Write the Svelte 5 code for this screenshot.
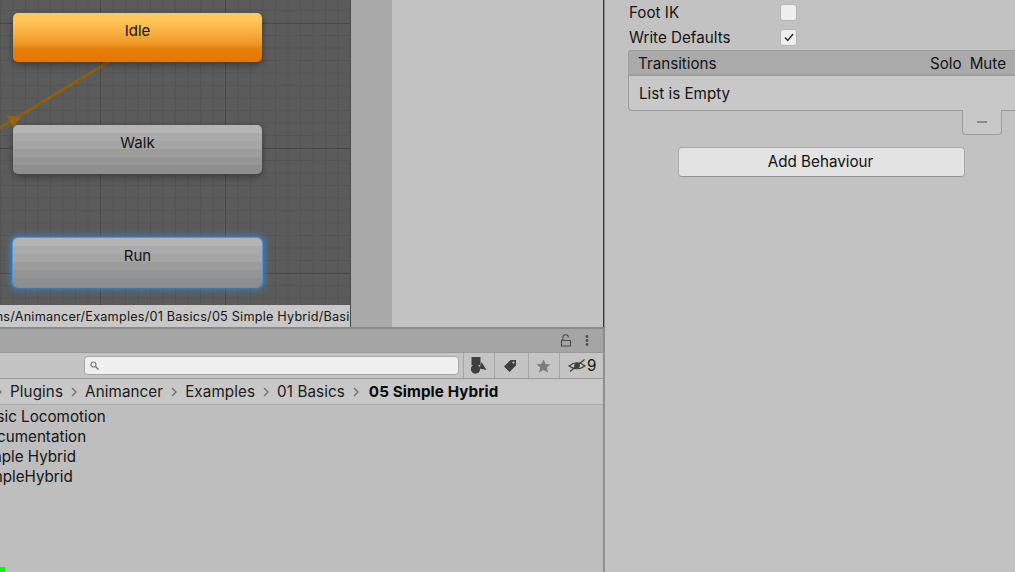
<script>
  const crumbs = ['Plugins', 'Animancer', 'Examples', '01 Basics'];
  const nodes = [
    { name: 'Idle', kind: 'default' },
    { name: 'Walk', kind: 'plain' },
    { name: 'Run', kind: 'selected' }
  ];
</script>

<div class="window">
  <div class="left">
    <div class="animator">
      <div class="graph-col">
        <div class="graph">
          <svg class="link" width="350" height="140" viewBox="0 0 350 140">
            <path d="M-2 129 L110 61" stroke="#8d5f0c" stroke-width="3" fill="none" />
            <path d="M6.500 115.500 L21 117 L13 127 Z" fill="#96650a" />
          </svg>
          {#each nodes as node}
            <div class="node {node.kind}"><span>{node.name}</span></div>
          {/each}
        </div>
        <div class="pathbar"><span>Assets/Plugins/Animancer/Examples/01 Basics/05 Simple Hybrid/Basic</span></div>
      </div>
      <div class="gutter"></div>
      <div class="blank"></div>
    </div>

    <div class="project">
      <div class="tabbar">
        <svg width="12" height="13" viewBox="0 0 12 13" class="lock">
          <path d="M1.500 6.500h9v5.500h-9z M2.800 6.500V3.500a2.800 2.800 0 0 1 5.600 0" fill="none" stroke="#4c4c4c" stroke-width="1.100" />
        </svg>
        <svg width="4" height="13" viewBox="0 0 4 13" class="dots">
          <circle cx="2" cy="2.500" r="1.400" fill="#4f4f4f" />
          <circle cx="2" cy="6.500" r="1.400" fill="#4f4f4f" />
          <circle cx="2" cy="10.500" r="1.400" fill="#4f4f4f" />
        </svg>
      </div>
      <div class="toolbar">
        <div class="search">
          <svg width="9" height="9" viewBox="0 0 9 9">
            <circle cx="3.500" cy="3.500" r="2.500" fill="none" stroke="#777" stroke-width="1.200" />
            <path d="M5.500 5.500L8.500 8.500" stroke="#777" stroke-width="1.500" />
          </svg>
        </div>
        <div class="tool first">
          <svg width="17" height="17" viewBox="0 0 17 17">
            <rect x="1.500" y="0" width="9" height="8" fill="#3f3f3f" />
            <circle cx="5.500" cy="12" r="4.700" fill="#3f3f3f" />
            <path d="M11.500 5 L16.500 13 L9.500 11.500 Z" fill="#3f3f3f" />
          </svg>
        </div>
        <div class="tool tag">
          <svg width="14" height="14" viewBox="0 0 14 14">
            <path d="M7.500 1 L13 1 L13 6.500 L6.500 13 L1 7.500 Z M10.500 2.500a1 1 0 1 0 .01 0z" fill="#3f3f3f" fill-rule="evenodd" />
          </svg>
        </div>
        <div class="tool star">
          <svg width="15" height="14" viewBox="0 0 15 14">
            <path d="M7.500 .5 L9.600 5 L14.500 5.400 L10.800 8.600 L12 13.500 L7.500 10.900 L3 13.500 L4.200 8.600 L.5 5.400 L5.400 5 Z" fill="#7c7c7c" />
          </svg>
        </div>
        <div class="tool eye">
          <svg width="18" height="15" viewBox="0 0 18 15">
            <path d="M1 8 Q9 1.500 17 8 Q9 13.500 1 8 Z" fill="none" stroke="#3f3f3f" stroke-width="1.200" />
            <circle cx="9" cy="7.500" r="2.800" fill="#3f3f3f" />
            <path d="M2 13.500 L16.500 1.500" stroke="#3f3f3f" stroke-width="1.200" />
          </svg>
          <span>9</span>
        </div>
      </div>
      <div class="crumbs">
        <svg class="chev lead" width="6" height="10" viewBox="0 0 6 10"><path d="M1 1l4 4-4 4" /></svg>
        {#each crumbs as crumb}
          <span>{crumb}</span>
          <svg class="chev" width="6" height="10" viewBox="0 0 6 10"><path d="M1 1l4 4-4 4" /></svg>
        {/each}
        <b>05 Simple Hybrid</b>
      </div>
      <div class="list">
        <div class="row r0">Basic Locomotion</div>
        <div class="row r1">Documentation</div>
        <div class="row r2">Simple Hybrid</div>
        <div class="row r3">SimpleHybrid</div>
        <div class="green"></div>
      </div>
    </div>
  </div>

  <div class="inspector">
    <div class="field">
      <label>Foot IK</label>
      <div class="check"></div>
    </div>
    <div class="field">
      <label>Write Defaults</label>
      <div class="check">
        <svg width="10" height="9" viewBox="0 0 10 9"><path d="M1 4.500L3.800 7.500L9 1" fill="none" stroke="#2a2a2a" stroke-width="1.400" /></svg>
      </div>
    </div>
    <div class="transitions">
      <div class="thead">
        <span class="grow">Transitions</span>
        <span>Solo</span>
        <span>Mute</span>
      </div>
      <div class="tbody">List is Empty</div>
      <div class="footer"><div class="minus"><i></i></div></div>
    </div>
    <button class="add">Add Behaviour</button>
  </div>
</div>

<style>
  :global(body) {
    margin: 0;
    overflow: hidden;
  }

  .window {
    width: 1015px;
    height: 572px;
    display: flex;
    overflow: hidden;
    background: #c2c2c2;
    color: #141414;
    font-family: Inter, "Noto Sans", sans-serif;
    font-size: 15.200px;
  }

  .left {
    width: 604px;
    display: flex;
    flex-direction: column;
    flex: none;
  }

  .animator {
    height: 327px;
    display: flex;
    flex: none;
  }

  .graph-col {
    width: 350px;
    display: flex;
    flex-direction: column;
    flex: none;
  }

  .graph {
    position: relative;
    height: 305px;
    flex: none;
    background-color: #5b5b5b;
    background-image:
      linear-gradient(to right, #545454 1px, transparent 1px),
      linear-gradient(to bottom, #545454 1px, transparent 1px);
    background-size: 12.500px 100%, 100% 12.500px;
    background-position: 0 0, 0 10px;
    overflow: hidden;
  }

  .graph::before {
    content: "";
    position: absolute;
    inset: 0;
    background-image:
      linear-gradient(to right, #484848 1px, transparent 1px),
      linear-gradient(to bottom, #484848 1px, transparent 1px);
    background-size: 125px 100%, 100% 125px;
    background-position: 100px 0, 0 23px;
  }

  .link {
    position: absolute;
    left: 0;
    top: 0;
  }

  .node {
    position: absolute;
    left: 13px;
    width: 249px;
    height: 49px;
    border-radius: 5px;
    text-align: center;
    font-size: 15px;
    box-shadow: 0 3px 7px rgba(0, 0, 0, 0.33);
  }

  .node span {
    display: block;
    padding-top: 9px;
    line-height: 18px;
  }

  .node:nth-of-type(1) {
    top: 13px;
  }

  .node:nth-of-type(2) {
    top: 125px;
  }

  .node:nth-of-type(3) {
    top: 238px;
  }

  .default {
    background: linear-gradient(to bottom,
      #ffc95c 0, #ffc558 8px, #f8ae3f 20px, #ef9a28 30px, #e87f08 36px, #e57500 49px);
  }

  .plain,
  .selected {
    background: linear-gradient(to bottom,
      #b4b4b4 0 8px, #aaaaaa 8px 16px, #a5a5a5 16px 24px, #9c9c9c 24px 32px, #959595 32px 40px, #8e8e8e 40px 49px);
  }

  .selected {
    box-shadow: 0 0 1px 1px #4a9de6, 0 0 6px 3px rgba(55, 140, 225, 0.65);
  }

  .pathbar {
    height: 22px;
    flex: none;
    background: #c8c8c8;
    overflow: hidden;
    white-space: nowrap;
    font-size: 12.700px;
    line-height: 24px;
    letter-spacing: 0.2px;
    color: #161616;
    display: flex;
    justify-content: flex-end;
  }

  .pathbar span {
    margin-right: -7px;
  }

  .gutter {
    width: 42px;
    flex: none;
    background: #a9a9a9;
    border-left: 1px solid #4b4b4b;
    box-sizing: border-box;
  }

  .blank {
    flex: 1;
    background: #c2c2c2;
    border-right: 1px solid #333333;
  }

  .project {
    flex: 1;
    display: flex;
    flex-direction: column;
    border-top: 2px solid #8b8b8b;
    border-right: 1px solid #8b8b8b;
  }

  .tabbar {
    height: 23px;
    flex: none;
    background: #a5a5a5;
    display: flex;
    align-items: center;
    justify-content: flex-end;
    gap: 13px;
    padding-right: 14px;
  }

  .toolbar {
    height: 27px;
    flex: none;
    box-sizing: border-box;
    display: flex;
    align-items: stretch;
    background: #c4c4c4;
    border-top: 1px solid #9a9a9a;
    border-bottom: 1px solid #9a9a9a;
  }

  .search {
    margin: 3px 4px 0 84px;
    width: 375px;
    height: 19px;
    box-sizing: border-box;
    background: #f0f0f0;
    border: 1px solid #a8a8a8;
    border-radius: 4px;
    display: flex;
    align-items: center;
    padding-left: 5px;
  }

  .tool {
    border-left: 1px solid #a6a6a6;
    display: flex;
    align-items: center;
    justify-content: center;
    box-sizing: border-box;
  }

  .first {
    width: 31px;
    padding-right: 2px;
  }

  .tag {
    width: 34px;
    padding-right: 4px;
  }

  .star {
    width: 31px;
    padding-right: 1px;
  }

  .eye {
    flex: 1;
    justify-content: flex-start;
    padding-left: 8px;
    gap: 1px;
  }

  .crumbs {
    height: 26px;
    flex: none;
    box-sizing: border-box;
    display: flex;
    align-items: center;
    gap: 8px;
    background: #c8c8c8;
    border-bottom: 1px solid #acacac;
    color: #1a1a1a;
    letter-spacing: 0.1px;
  }

  .crumbs b {
    font-weight: 700;
    color: #0a0a0a;
    margin-left: 2px;
  }

  .chev {
    flex: none;
    fill: none;
    stroke: #6e6e6e;
    stroke-width: 1.300;
  }

  .lead {
    margin-left: -4px;
  }

  .list {
    flex: 1;
    position: relative;
    background: #bebebe;
    padding-top: 2px;
    overflow: hidden;
  }

  .row {
    height: 20px;
    line-height: 20px;
    white-space: nowrap;
    color: #151515;
  }

  .r0 { margin-left: -22px; }
  .r1 { margin-left: -23px; }
  .r2 { margin-left: -25px; }
  .r3 { margin-left: -24px; }

  .green {
    position: absolute;
    left: 0;
    bottom: 0;
    width: 5px;
    height: 5px;
    background: #00ff00;
  }

  .inspector {
    flex: 1;
    box-sizing: border-box;
    background: #c2c2c2;
    border-left: 1px solid #8f8f8f;
    padding: 0 0 0 23px;
  }

  .field {
    height: 25px;
    display: flex;
    align-items: center;
    padding-left: 1px;
  }

  .field label {
    width: 151px;
  }

  .check {
    width: 17px;
    height: 17px;
    box-sizing: border-box;
    background: #eeeeee;
    border: 1px solid #b4b4b4;
    border-radius: 3px;
    display: flex;
    align-items: center;
    justify-content: center;
  }

  .thead {
    height: 25px;
    box-sizing: border-box;
    display: flex;
    align-items: center;
    gap: 8px;
    padding: 1px 9px 0 9px;
    background: #aaaaaa;
    border: 1px solid #a0a0a0;
    border-right: 0;
    border-radius: 3px 0 0 0;
  }

  .grow {
    flex: 1;
  }

  .tbody {
    height: 36px;
    box-sizing: border-box;
    padding: 0 10px;
    line-height: 36px;
    background: #c8c8c8;
    border: 1px solid #9c9c9c;
    border-right: 0;
    border-radius: 0 0 0 4px;
  }

  .footer {
    display: flex;
    justify-content: flex-end;
    padding-right: 13px;
  }

  .minus {
    width: 40px;
    height: 25px;
    box-sizing: border-box;
    background: #c8c8c8;
    border: 1px solid #9c9c9c;
    border-top: 0;
    border-radius: 0 0 4px 4px;
    margin-top: -1px;
    display: flex;
    align-items: center;
    justify-content: center;
  }

  .minus i {
    display: block;
    width: 10px;
    height: 2px;
    background: #8b8b8b;
  }

  .add {
    display: block;
    margin: 12px 0 0 50px;
    width: 287px;
    height: 30px;
    background: #e3e3e3;
    border: 1px solid #a9a9a9;
    border-bottom-color: #949494;
    border-radius: 4px;
    color: #111;
    font: inherit;
    padding: 0 2px 2px 0;
  }
</style>
